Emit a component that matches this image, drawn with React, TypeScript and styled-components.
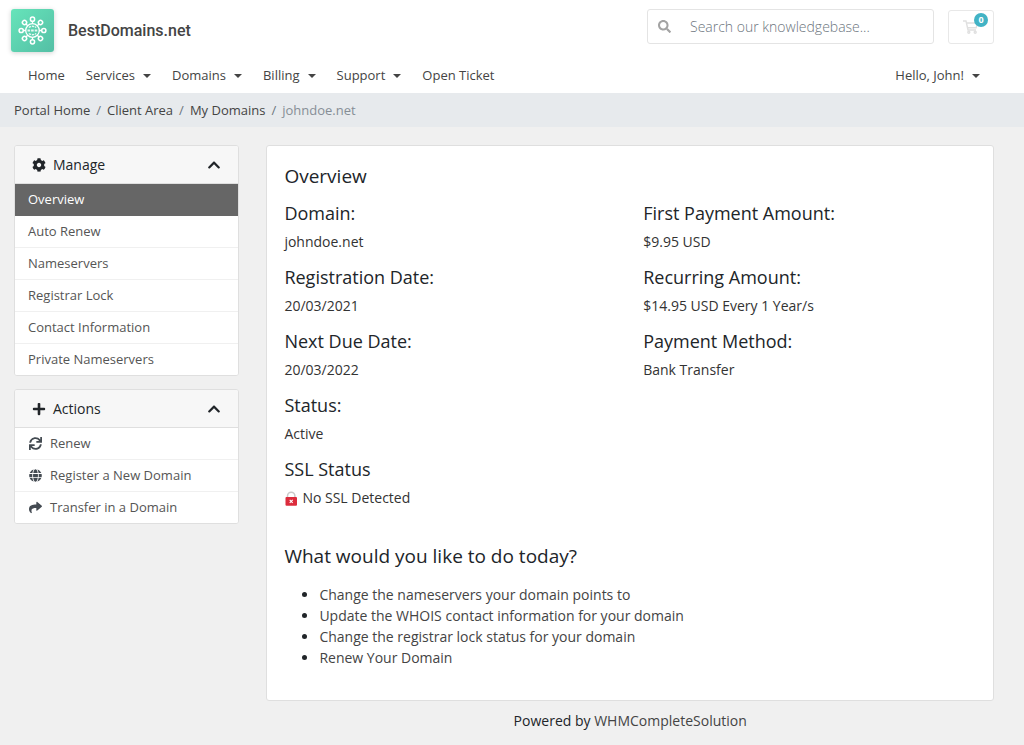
import React from "react";
import styled, { createGlobalStyle, css } from "styled-components";
import {
  FaChevronUp,
  FaCog,
  FaGlobe,
  FaPlus,
  FaSearch,
  FaShare,
  FaSync,
} from "react-icons/fa";

const GlobalStyle = createGlobalStyle`
  *, *::before, *::after { box-sizing: border-box; }
  body {
    margin: 0;
    background: #f0f0f0;
    color: #212529;
    font: 14px/21px "Open Sans", "Noto Sans", sans-serif;
  }
  h1, h2, h3, p, ul, ol, dl, dd { margin: 0; padding: 0; font-weight: 400; }
  a { color: #444; text-decoration: none; }
  button, input { font-family: inherit; }
`;

const Header = styled.header`
  background: #fff;
`;

const TopBar = styled.div`
  display: flex;
  align-items: center;
  padding: 9px 30px 0 11px;
`;

const Brand = styled.a`
  display: flex;
  align-items: center;
  gap: 14px;
  margin-right: auto;
  color: #444;
  font: 500 16px/24px Roboto, sans-serif;
`;

const LogoSvg = styled.svg`
  display: block;
  width: 43px;
  height: 43px;
  border-radius: 3px;
  box-shadow: 0 1px 5px rgba(0, 0, 0, 0.18);
`;

const SearchForm = styled.form`
  display: flex;
  align-items: center;
  width: 287px;
  height: 35px;
  margin: 0 14px 8px 0;
  border: 1px solid #e4e4e4;
  border-radius: 3px;
  background: #fff;
`;

const SearchButton = styled.button`
  display: flex;
  padding: 0 11px 0 10px;
  border: 0;
  background: none;
  color: #a3a3a3;
  font-size: 13px;
`;

const SearchInput = styled.input`
  flex: 1;
  min-width: 0;
  padding: 0 8px;
  border: 0;
  outline: 0;
  background: none;
  font-size: 14px;
  font-weight: 300;
  &::placeholder {
    color: #6c757d;
    opacity: 1;
  }
`;

const CartButton = styled.button`
  position: relative;
  display: flex;
  align-items: center;
  justify-content: center;
  width: 46px;
  height: 34px;
  margin-bottom: 8px;
  padding: 0;
  border: 1px solid #e8e8e8;
  border-radius: 3px;
  background: #fff;
  color: #e0e0e0;
`;

const CartBadge = styled.span`
  position: absolute;
  top: 2px;
  right: 5px;
  width: 14px;
  height: 14px;
  border-radius: 50%;
  background: #42b3c5;
  color: #fff;
  font-size: 9px;
  line-height: 14px;
  font-weight: 700;
  text-align: center;
`;

const Nav = styled.nav`
  display: flex;
  align-items: center;
  justify-content: space-between;
  padding: 13px 44px 7px 28px;
`;

const NavGroup = styled.div`
  display: flex;
  gap: 21px;
`;

const navItem = css`
  display: flex;
  align-items: center;
  gap: 8px;
  padding: 0;
  border: 0;
  background: none;
  color: #444;
  font-size: 13px;
  line-height: 21px;
`;

const NavLink = styled.a`
  ${navItem}
`;

const NavButton = styled.button`
  ${navItem}
  &::after {
    content: "";
    border: 4px solid transparent;
    border-top-color: #444;
    border-bottom: 0;
  }
`;

const Breadcrumb = styled.ol`
  display: flex;
  padding: 7px 14px 6px;
  background: #e7eaed;
  list-style: none;
  font-size: 13px;
  line-height: 21px;
`;

const Crumb = styled.li`
  color: #868e96;
  & + &::before {
    content: "/";
    padding: 0 6px;
    color: #6c757d;
  }
`;

const Content = styled.div`
  display: flex;
  align-items: flex-start;
  gap: 27px;
  padding: 18px 30px 0 14px;
`;

const Sidebar = styled.aside`
  flex: none;
  display: flex;
  flex-direction: column;
  gap: 13px;
  width: 23%;
`;

const Card = styled.section`
  border: 1px solid #dfdfdf;
  border-radius: 3px;
  background: #fff;
  overflow: hidden;
`;

const CardHeader = styled.h2`
  display: flex;
  align-items: center;
  gap: 7px;
  height: 38px;
  padding: 0 17px;
  border-bottom: 1px solid #dfdfdf;
  background: #f7f7f7;
  font-size: 14px;
  line-height: 21px;
`;

const CollapseButton = styled.button`
  display: flex;
  margin-left: auto;
  padding: 0;
  border: 0;
  background: none;
  color: #212529;
  font-size: 14px;
`;

const Menu = styled.ul`
  list-style: none;
`;

const MenuLink = styled.a<{ $active?: boolean }>`
  display: flex;
  align-items: center;
  gap: 7px;
  height: 32px;
  padding: 0 14px 0 13px;
  border-bottom: 1px solid #f0f0f0;
  background: ${(p) => (p.$active ? "#666" : "#fff")};
  color: ${(p) => (p.$active ? "#fff" : "#555")};
  font-size: 13px;
  line-height: 21px;
  font-weight: ${(p) => (p.$active ? 500 : 400)};
  ${(p) => p.$active && "border-color: #666;"}
  li:last-child > & {
    height: 31px;
    border-bottom: 0;
  }
  svg {
    width: 15px;
    color: #444b52;
  }
`;

const MainColumn = styled.div`
  flex: 1;
  min-width: 0;
`;

const Panel = styled.main`
  padding: 17px 17px 32px;
  border: 1px solid #dfdfdf;
  border-radius: 3px;
  background: #fff;
`;

const Title = styled.h1`
  font-size: 19px;
  line-height: 26px;
`;

const Details = styled.div`
  display: grid;
  grid-template-columns: 1fr 1fr;
  gap: 0 26px;
  margin: 13px 0 35px;
`;

const Column = styled.dl`
  display: flex;
  flex-direction: column;
  gap: 14px;
`;

const Term = styled.dt`
  margin-bottom: 7px;
  font-size: 18px;
  line-height: 22px;
`;

const Value = styled.dd`
  display: flex;
  align-items: center;
  gap: 4px;
  color: #333;
`;

const TaskList = styled.ul`
  margin-top: 15px;
  padding-left: 35px;
`;

const Footer = styled.footer`
  padding: 9px 0 14px;
  text-align: center;
`;

const Logo = () => (
  <LogoSvg viewBox="0 0 43 43" aria-hidden="true">
    <defs>
      <linearGradient id="brand" x1="0" y1="0" x2="1" y2="1">
        <stop offset="0" stopColor="#66e4ba" />
        <stop offset="1" stopColor="#54bfa5" />
      </linearGradient>
    </defs>
    <rect width="43" height="43" fill="url(#brand)" />
    <g fill="none" stroke="#fff" strokeWidth="1.3">
      <circle cx="21.5" cy="21.5" r="6.8" />
      {[0, 45, 90, 135, 180, 225, 270, 315].map((angle) => (
        <g key={angle} transform={`rotate(${angle} 21.5 21.5)`}>
          <path d="M21.5 14.7v-2.4" />
          <circle cx="21.5" cy="10.2" r="2.1" strokeWidth="1.5" />
        </g>
      ))}
      <path d="M16.5 21.5h10" strokeWidth="1.8" strokeDasharray="2.6 1" opacity="0.85" />
      <path d="M17.8 18.5c2-1.5 5.4-1.5 7.4 0M17.8 24.5c2 1.5 5.4 1.5 7.4 0" strokeWidth="1.5" strokeDasharray="2.4 0.8" opacity="0.85" />
    </g>
  </LogoSvg>
);

const CartIcon = () => (
  <svg width="16" height="14" viewBox="0 0 16 14" fill="none" stroke="currentColor" strokeWidth="1.4" aria-hidden="true">
    <path d="M0 1h3l2 9h8M3.5 3h11l-1.3 4.8H4.6" />
    <circle cx="5.8" cy="12.2" r="1" />
    <circle cx="12.2" cy="12.2" r="1" />
  </svg>
);

const LockIcon = () => (
  <svg width="14" height="16" viewBox="0 0 14 16" fill="none" aria-hidden="true">
    <path d="M3.5 8V6a3.7 3.7 0 0 1 7.4 0v2" stroke="#c9c9c9" strokeWidth="1.5" />
    <rect x="1.5" y="7" width="11.5" height="8.8" rx="1" fill="#dc2c3c" />
    <path d="M5.7 9.9l3 3M8.7 9.9l-3 3" stroke="#fff" strokeWidth="1.1" />
  </svg>
);

const menus = ["Services", "Domains", "Billing", "Support"];
const manage = [
  "Overview",
  "Auto Renew",
  "Nameservers",
  "Registrar Lock",
  "Contact Information",
  "Private Nameservers",
];
const actions = [
  { icon: <FaSync />, label: "Renew" },
  { icon: <FaGlobe />, label: "Register a New Domain" },
  { icon: <FaShare />, label: "Transfer in a Domain" },
];
const details: { term: string; value: React.ReactNode }[][] = [
  [
    { term: "Domain:", value: "johndoe.net" },
    { term: "Registration Date:", value: "20/03/2021" },
    { term: "Next Due Date:", value: "20/03/2022" },
    { term: "Status:", value: "Active" },
    { term: "SSL Status", value: <><LockIcon />No SSL Detected</> },
  ],
  [
    { term: "First Payment Amount:", value: "$9.95 USD" },
    { term: "Recurring Amount:", value: "$14.95 USD Every 1 Year/s" },
    { term: "Payment Method:", value: "Bank Transfer" },
  ],
];
const tasks = [
  "Change the nameservers your domain points to",
  "Update the WHOIS contact information for your domain",
  "Change the registrar lock status for your domain",
  "Renew Your Domain",
];

export default function App() {
  return (
    <>
      <GlobalStyle />
      <Header>
        <TopBar>
          <Brand href="#">
            <Logo />
            BestDomains.net
          </Brand>
          <SearchForm role="search">
            <SearchButton type="submit" aria-label="Search">
              <FaSearch />
            </SearchButton>
            <SearchInput
              type="text"
              aria-label="Search our knowledgebase"
              placeholder="Search our knowledgebase..."
            />
          </SearchForm>
          <CartButton type="button" aria-label="Shopping cart">
            <CartIcon />
            <CartBadge>0</CartBadge>
          </CartButton>
        </TopBar>
        <Nav>
          <NavGroup>
            <NavLink href="#">Home</NavLink>
            {menus.map((label) => (
              <NavButton key={label} type="button">{label}</NavButton>
            ))}
            <NavLink href="#">Open Ticket</NavLink>
          </NavGroup>
          <NavButton type="button">Hello, John!</NavButton>
        </Nav>
      </Header>
      <nav aria-label="Breadcrumb">
        <Breadcrumb>
          {["Portal Home", "Client Area", "My Domains"].map((label) => (
            <Crumb key={label}><a href="#">{label}</a></Crumb>
          ))}
          <Crumb aria-current="page">johndoe.net</Crumb>
        </Breadcrumb>
      </nav>
      <Content>
        <Sidebar>
          <Card>
            <CardHeader>
              <FaCog />
              Manage
              <CollapseButton type="button" aria-label="Collapse Manage">
                <FaChevronUp />
              </CollapseButton>
            </CardHeader>
            <Menu>
              {manage.map((label, i) => (
                <li key={label}>
                  <MenuLink href="#" $active={i === 0}>{label}</MenuLink>
                </li>
              ))}
            </Menu>
          </Card>
          <Card>
            <CardHeader>
              <FaPlus />
              Actions
              <CollapseButton type="button" aria-label="Collapse Actions">
                <FaChevronUp />
              </CollapseButton>
            </CardHeader>
            <Menu>
              {actions.map(({ icon, label }) => (
                <li key={label}>
                  <MenuLink href="#">{icon}{label}</MenuLink>
                </li>
              ))}
            </Menu>
          </Card>
        </Sidebar>
        <MainColumn>
          <Panel>
            <Title>Overview</Title>
            <Details>
              {details.map((column, i) => (
                <Column key={i}>
                  {column.map(({ term, value }) => (
                    <div key={term}>
                      <Term>{term}</Term>
                      <Value>{value}</Value>
                    </div>
                  ))}
                </Column>
              ))}
            </Details>
            <Title as="h2">What would you like to do today?</Title>
            <TaskList>
              {tasks.map((task) => (
                <li key={task}><a href="#">{task}</a></li>
              ))}
            </TaskList>
          </Panel>
          <Footer>
            Powered by <a href="#">WHMCompleteSolution</a>
          </Footer>
        </MainColumn>
      </Content>
    </>
  );
}
